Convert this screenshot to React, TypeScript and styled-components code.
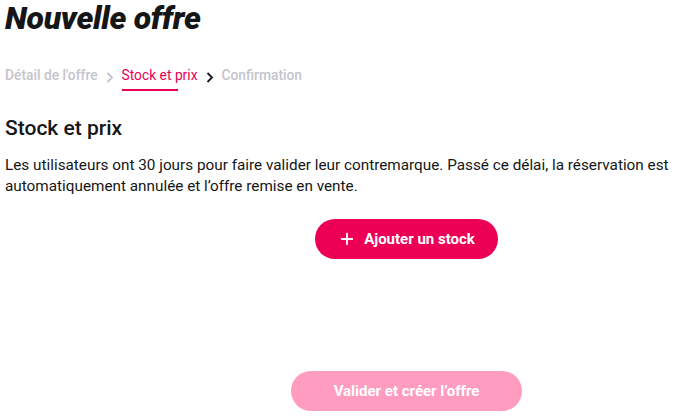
import React from "react";
import styled, { createGlobalStyle } from "styled-components";
import { Plus } from "lucide-react";

const GlobalStyle = createGlobalStyle`
  body {
    margin: 0;
    background: #ffffff;
    font-family: Roboto, "Liberation Sans", sans-serif;
    color: #161617;
  }
`;

const Page = styled.div`
  padding: 0 5px;
  width: 692px;
  height: 420px;
  box-sizing: border-box;
  overflow: hidden;
`;

const Title = styled.h1`
  margin: 0;
  padding-top: 1px;
  font-size: 32px;
  line-height: 34px;
  font-weight: 900;
  font-style: italic;
  letter-spacing: -0.3px;
`;

const Steps = styled.nav`
  display: flex;
  align-items: center;
  margin-top: 28px;
  height: 24px;
`;

const Step = styled.span<{ $state: "done" | "active" | "todo" }>`
  position: relative;
  font-size: 13.8px;
  font-weight: ${(p) => (p.$state === "active" ? 400 : 500)};
  color: ${(p) => (p.$state === "active" ? "#eb0055" : "#c4c4cc")};

  &::after {
    content: "";
    display: ${(p) => (p.$state === "active" ? "block" : "none")};
    position: absolute;
    left: 0;
    bottom: -8px;
    width: 56px;
    height: 2px;
    background: #eb0055;
  }
`;

const Chevron = styled.svg<{ $dark?: boolean }>`
  margin: 4px 8px 0 8px;
  color: ${(p) => (p.$dark ? "#161617" : "#c4c4cc")};
`;

const SectionTitle = styled.h2`
  margin: 29px 0 0;
  font-size: 21px;
  line-height: 24px;
  font-weight: 500;
`;

const Text = styled.p`
  margin: 15px 0 0;
  font-size: 15.3px;
  line-height: 21px;
  color: #161617;
`;

const ButtonRow = styled.div<{ $top: number }>`
  display: flex;
  justify-content: center;
  padding-left: 121px;
  margin-top: ${(p) => p.$top}px;
`;

const Button = styled.button<{ $disabled?: boolean }>`
  display: inline-flex;
  align-items: center;
  gap: 8px;
  height: 40px;
  padding: 0 ${(p) => (p.$disabled ? 43 : 23)}px;
  border: none;
  border-radius: 20px;
  background: ${(p) => (p.$disabled ? "#ff9cbf" : "#eb0055")};
  color: #ffffff;
  font-family: Roboto, "Liberation Sans", sans-serif;
  font-size: 15px;
  font-weight: 700;
  cursor: ${(p) => (p.$disabled ? "default" : "pointer")};
`;

const Arrow = ({ dark }: { dark?: boolean }) => (
  <Chevron $dark={dark} width="8" height="11" viewBox="0 0 8 11" fill="none">
    <path d="M1.5 1 L6 5.5 L1.5 10" stroke="currentColor" strokeWidth="1.8" />
  </Chevron>
);

export default function App() {
  return (
    <Page>
      <GlobalStyle />
      <Title>Nouvelle offre</Title>
      <Steps>
        <Step $state="done">Détail de l'offre</Step>
        <Arrow />
        <Step $state="active">Stock et prix</Step>
        <Arrow dark />
        <Step $state="todo">Confirmation</Step>
      </Steps>
      <SectionTitle>Stock et prix</SectionTitle>
      <Text>
        Les utilisateurs ont 30 jours pour faire valider leur contremarque. Passé ce délai, la
        réservation est automatiquement annulée et l’offre remise en vente.
      </Text>
      <ButtonRow $top={22}>
        <Button>
          <Plus size={18} strokeWidth={2.4} />
          Ajouter un stock
        </Button>
      </ButtonRow>
      <ButtonRow $top={112}>
        <Button $disabled>Valider et créer l’offre</Button>
      </ButtonRow>
    </Page>
  );
}
